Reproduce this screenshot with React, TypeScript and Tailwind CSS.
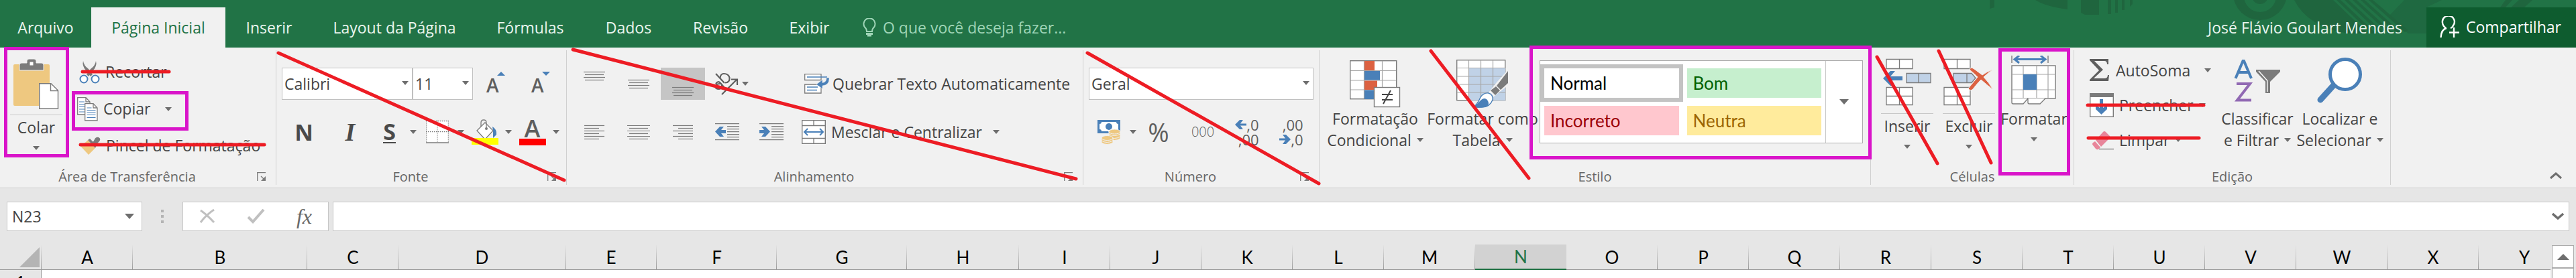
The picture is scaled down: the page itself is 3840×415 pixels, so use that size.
import type { ReactNode } from "react";

const GRAY = "#7b7b7b";
const BLUE = "#4a80b8";
const RED = "#ed1c24";
const MAGENTA = "#d914c9";

function Arrow() {
  return (
    <svg width="10" height="6" viewBox="0 0 10 6" className="shrink-0">
      <path d="M0 0H10L5 6Z" fill="#6e6e6e" />
    </svg>
  );
}

function Launcher() {
  return (
    <svg width="14" height="14" viewBox="0 0 14 14" className="shrink-0">
      <path d="M.7 13V.7H13" fill="none" stroke={GRAY} strokeWidth="1.3" />
      <path d="M6 6l4 4" stroke={GRAY} strokeWidth="1.3" />
      <path d="M13 6v7H6Z" fill={GRAY} />
    </svg>
  );
}

function Group({ label, className, launcher, children }: { label: string; className: string; launcher?: boolean; children: ReactNode }) {
  return (
    <section aria-label={label} className={`flex shrink-0 flex-col ${className}`}>
      <div className="flex flex-1">
        <div className="flex min-w-0 flex-1 flex-col">
          <div className="h-[178px]">{children}</div>
          <div className="flex h-[30px] items-center">
            <div className="flex-1 text-center text-[20px] leading-[30px] text-[#666]">{label}</div>
            {launcher && (
              <button aria-label={`Opções de ${label}`} className="flex w-8 justify-start pl-1">
                <Launcher />
              </button>
            )}
          </div>
        </div>
        <div className="my-1 w-px bg-[#d0d0d0]" />
      </div>
    </section>
  );
}

function Big({ icon, lines, className, rule, arrowBelow }: { icon: ReactNode; lines: string[]; className: string; rule?: boolean; arrowBelow?: boolean }) {
  return (
    <button className={`flex shrink-0 flex-col items-center whitespace-nowrap pt-3 leading-8 ${className}`}>
      {icon}
      {rule && <span className="mt-2 mb-[2px] h-px w-full bg-[#c8c8c8]" />}
      {lines.map((t, i) => (
        <span key={t} className="flex items-center gap-2">
          {t}
          {!arrowBelow && i === lines.length - 1 && <Arrow />}
        </span>
      ))}
      {arrowBelow && (
        <span className="mt-3">
          <Arrow />
        </span>
      )}
    </button>
  );
}

function Tool({ label, children, className = "w-[66px]" }: { label: string; children: ReactNode; className?: string }) {
  return (
    <button aria-label={label} className={`flex h-12 shrink-0 items-center justify-center ${className}`}>
      {children}
    </button>
  );
}

function SplitTool({ label, children }: { label: string; children: ReactNode }) {
  return (
    <button aria-label={label} className="flex h-12 w-[71px] shrink-0 items-center">
      <span className="flex flex-1 justify-center">{children}</span>
      <Arrow />
    </button>
  );
}

function Combo({ label, value, className }: { label: string; value: string; className: string }) {
  return (
    <div className={`relative shrink-0 ${className}`}>
      <select aria-label={label} defaultValue={value} className="h-12 w-full appearance-none border border-[#c0c0c0] bg-white pl-[3px] leading-8 text-[#444]">
        <option>{value}</option>
      </select>
      <span className="pointer-events-none absolute top-5 right-[6px]">
        <Arrow />
      </span>
    </div>
  );
}

type LineRow = [number, number, number];

function Lines({ rows, shift = 0 }: { rows: LineRow[]; shift?: number }) {
  return (
    <svg width="36" height="48" viewBox="0 0 36 48">
      {rows.map(([y, a, b]) => (
        <path key={y} d={`M${a} ${y + shift + 0.5}H${b}`} stroke={GRAY} strokeWidth="1.2" />
      ))}
    </svg>
  );
}

const verticalRows: LineRow[] = [[6, 2, 34], [10, 4, 32], [14, 2, 34], [18, 4, 32]];
const leftRows: LineRow[] = [[14, 3, 33], [18, 3, 25], [22, 3, 33], [26, 3, 25], [30, 3, 33], [34, 3, 25]];
const centerRows: LineRow[] = [[14, 1, 35], [18, 4, 32], [22, 1, 35], [26, 4, 32], [30, 1, 35], [34, 4, 32]];
const rightRows: LineRow[] = [[14, 3, 33], [18, 11, 33], [22, 3, 33], [26, 11, 33], [30, 3, 33], [34, 11, 33]];

function PasteIcon() {
  return (
    <svg width="68" height="80" viewBox="0 0 68 80" className="shrink-0">
      <rect x="0" y="13" width="54" height="62" rx="2" fill="#eec880" />
      <path d="M9 22V14q0-3 3-3h8V8q0-3 3-3h8q3 0 3 3v3h8q3 0 3 3v8Z" fill={GRAY} stroke="#f1f1f1" strokeWidth="1" />
      <rect x="24.500" y="9.500" width="5" height="5" fill="#fff" />
      <path d="M38.700 41.700H56L66.500 52V79.300H38.700Z" fill="#fff" stroke={GRAY} strokeWidth="1.400" />
      <path d="M55.500 42v10.500H66" fill="none" stroke={GRAY} strokeWidth="1.400" />
    </svg>
  );
}

function CutIcon() {
  return (
    <svg width="31" height="34" viewBox="0 0 31 34">
      <path d="M6 0Q7 7 14 12L20 20l-3 3-7-9Q4 7 6 0Z" fill={GRAY} />
      <path d="M25 0Q24 7 17 12L11 20l3 3 7-9Q27 7 25 0Z" fill={GRAY} />
      <circle cx="7" cy="27" r="5.500" fill="#fff" stroke={BLUE} strokeWidth="2" />
      <circle cx="24" cy="27" r="5.500" fill="#fff" stroke={BLUE} strokeWidth="2" />
    </svg>
  );
}

function CopyIcon() {
  return (
    <svg width="31" height="36" viewBox="0 0 31 36">
      <path d="M.7.7H13L19 7V26H.7Z" fill="#fff" stroke={GRAY} strokeWidth="1.300" />
      <path d="M13 .7V7h6" fill="none" stroke={GRAY} strokeWidth="1.300" />
      <path d="M3 7h8M3 11h14M3 14h14M3 18h14M3 22h14" fill="none" stroke={BLUE} strokeWidth="1.200" />
      <path d="M11.700 9.700H24L30 16V35H11.700Z" fill="#fff" stroke={GRAY} strokeWidth="1.300" />
      <path d="M24 9.700V16h6" fill="none" stroke={GRAY} strokeWidth="1.300" />
      <path d="M14.500 16h7M14.500 19.500h13M14.500 23h13M14.500 26.500h13M14.500 30.500h13" stroke={BLUE} strokeWidth="1.200" />
    </svg>
  );
}

function BrushIcon() {
  return (
    <svg width="33" height="28" viewBox="0 0 33 28">
      <path d="M1 12Q9 11 14 5L25 17L15 27Z" fill="#eec880" />
      <path d="M14 5l3-2 10 10-2 4Z" fill={GRAY} />
      <path d="M20 9Q23 7 24 4Q26 0 30 1Q34 3 31 7L25 13Z" fill={GRAY} />
    </svg>
  );
}

function FontSizeIcon({ up }: { up?: boolean }) {
  return (
    <span className="relative flex h-12 w-7 items-end pb-1">
      <span className="text-[28px] leading-9 font-semibold text-[#5e5e5e]">A</span>
      <svg width="12" height="6" viewBox="0 0 12 6" className="absolute top-[6px] right-0">
        <path d={up ? "M0 6H12L6 0Z" : "M0 0H12L6 6Z"} fill={BLUE} />
      </svg>
    </span>
  );
}

function BordersIcon() {
  return (
    <svg width="34" height="34" viewBox="0 0 34 34">
      <rect x="1" y="1" width="32" height="32" fill="#fff" />
      <path d="M.7 0V33M17 0V33M33.300 0V33M0 .7H34M0 16.700H34" stroke={GRAY} strokeWidth="1.200" strokeDasharray="1.500 1.500" />
      <path d="M0 33H34" stroke={GRAY} strokeWidth="1.500" />
    </svg>
  );
}

function FillIcon() {
  return (
    <svg width="40" height="40" viewBox="0 0 40 40">
      <path d="M8 18L20 6L32 18L20 31Z" fill="#fff" stroke={GRAY} strokeWidth="1.300" />
      <path d="M14 12V6q0-4 4-4t4 4v8" fill="none" stroke={GRAY} strokeWidth="1.300" />
      <circle cx="22" cy="15" r="2" fill={GRAY} />
      <path d="M31 12Q38 16 37 24L32 29V18Z" fill={BLUE} />
      <path d="M0 29H40V39H0Z" fill="#ff0" />
    </svg>
  );
}

function OrientationIcon() {
  return (
    <svg width="38" height="36" viewBox="0 0 38 36">
      <g fill="none" stroke="#5e5e5e" strokeWidth="2.200">
        <path d="M3 3L16 17" />
        <path d="M9.500 9.500Q10 3 15 3Q22 3 23.500 9Q24 16 17 16.500" />
        <path d="M3 18Q6 13 10 17L16 24M12 19Q13 25 8 26Q2 26 2 21Q4 18 10 18" />
        <path d="M12 34L34 12M26 11.500H35V20" />
      </g>
    </svg>
  );
}

function WrapIcon() {
  return (
    <svg width="38" height="30" viewBox="0 0 38 30">
      <path d="M.7.7H25V9.500H.7ZM.7 16H25V29H.7Z" fill="#fff" stroke={GRAY} strokeWidth="1.300" />
      <path d="M4 5H34M4 20H20M4 24.500H19" stroke={BLUE} strokeWidth="1.300" />
      <path d="M37 6V8Q37 17 27 18v4.500L18 16l9-7v4.500Q33 13 33 6Z" fill={BLUE} stroke="#f1f1f1" strokeWidth=".5" />
    </svg>
  );
}

function MergeIcon() {
  return (
    <svg width="36" height="36" viewBox="0 0 36 36">
      <rect x=".7" y=".7" width="34.600" height="34.600" fill="#fff" stroke={GRAY} strokeWidth="1.400" />
      <path d="M1 8.500H35M1 27.500H35M18 1V8.500M18 27.500V35" stroke={GRAY} strokeWidth="1.300" />
      <path d="M4 18H32M9 13L4 18l5 5M27 13l5 5-5 5" fill="none" stroke={BLUE} strokeWidth="2" />
    </svg>
  );
}

function IndentIcon({ right }: { right?: boolean }) {
  return (
    <svg width="36" height="26" viewBox="0 0 36 26">
      <path d="M0 .7H36M18 4.700H36M18 8.700H36M18 12.700H36M18 16.700H36M18 20.700H36M0 24.700H36" stroke={GRAY} strokeWidth="1.200" />
      <path d={right ? "M0 10H7L3 5H9L16 12.500L9 20H3L7 15H0Z" : "M16 10H9L13 5H7L0 12.500L7 20H13L9 15H16Z"} fill={BLUE} />
    </svg>
  );
}

function MoneyIcon() {
  return (
    <svg width="35" height="38" viewBox="0 0 35 38">
      <rect x="0" y="1" width="34" height="20" fill={BLUE} />
      <path d="M6 4H28Q28 7 31 7V15Q28 15 28 18H6Q6 15 3 15V7Q6 7 6 4Z" fill="#fff" />
      <circle cx="17" cy="11" r="5" fill={BLUE} />
      <g fill="#eec880" stroke="#f1f1f1" strokeWidth="1">
        <path d="M17 18v11q8 5 17 0V18Z" />
        <path d="M17 22q8 5 17 0M17 26q8 5 17 0" fill="none" />
        <ellipse cx="25.500" cy="18.500" rx="8.500" ry="3.500" />
        <path d="M6 28v7q8 5 17 0V28Z" />
        <path d="M6 32q8 5 17 0" fill="none" />
        <ellipse cx="14.500" cy="28" rx="8.500" ry="3.500" />
      </g>
    </svg>
  );
}

function SmallArrow({ right }: { right?: boolean }) {
  return (
    <svg width="17" height="14" viewBox="0 0 17 14">
      <path d={right ? "M0 5.500H9L5 0H10L17 7L10 14H5L9 8.500H0Z" : "M17 5.500H8L12 0H7L0 7L7 14H12L8 8.500H17Z"} fill={BLUE} />
    </svg>
  );
}

function CondIcon() {
  return (
    <svg width="76" height="78" viewBox="0 0 76 78" className="shrink-0">
      <rect x=".7" y="7.700" width="69" height="57" fill="#fff" stroke={GRAY} strokeWidth="1.400" />
      <path d="M1 22.500H69M1 37H69M1 51H69M21.500 8V64M48.500 8V64" stroke="#a6a6a6" strokeWidth="1.200" />
      <path d="M22 8H37V22H22ZM22 37.500H41V51H22Z" fill="#dc6141" />
      <path d="M22 23H45V36.500H22ZM22 51.500H37V65H22Z" fill={BLUE} />
      <rect x="36.500" y="47.500" width="38" height="29" fill="#fff" stroke={GRAY} strokeWidth="1.400" />
      <path d="M48 58H64M48 66H64M61 52L50 72" stroke="#444" strokeWidth="2" />
    </svg>
  );
}

function TableIcon() {
  return (
    <svg width="78" height="78" viewBox="0 0 78 78" className="shrink-0">
      <rect x=".7" y="6.700" width="72" height="60" fill="#fff" stroke={GRAY} strokeWidth="1.400" />
      <rect x="19" y="19" width="54" height="48" fill="#c0d2e7" />
      <path d="M1 18.500H73M1 31H73M1 43H73M1 55H73M18.500 7V67M36.500 7V67M54.500 7V67" stroke="#a6a6a6" strokeWidth="1.200" />
      <path d="M78 20V44L66 53L50 66L44 60L60 40Z" fill="#f1f1f1" />
      <path d="M77 23V41L66 51L60 45ZM59 46L65 52L58 59L51 52Z" fill={GRAY} />
      <path d="M26 77Q33 70 36 62Q41 55 48 56Q55 58 54 66Q50 77 38 77Z" fill="#fff" stroke={BLUE} strokeWidth="1.400" />
      <path d="M26 77Q33 70 37 66Q42 62 46 66Q50 72 46 76Q36 79 26 77Z" fill={BLUE} />
    </svg>
  );
}

function InsertIcon() {
  return (
    <svg width="74" height="78" viewBox="0 0 74 78" className="shrink-0">
      <g fill="#fff" stroke={GRAY} strokeWidth="1.300">
        <path d="M6 5.500H45V19.500H6ZM25.500 5.500V19.500M6 47.500H45V73.500H6ZM25.500 47.500V73.500M6 60.500H45" />
        <path d="M36 26.500H72V40.500H36ZM54 26.500V40.500" fill="#c0d2e7" />
      </g>
      <path d="M1 34L12 23H19L12 31H30V37H12L19 45H12Z" fill={BLUE} />
    </svg>
  );
}

function DeleteIcon() {
  return (
    <svg width="76" height="78" viewBox="0 0 76 78" className="shrink-0">
      <g fill="#fff" stroke={GRAY} strokeWidth="1.300">
        <path d="M1 5.500H40V19.500H1ZM20.500 5.500V19.500M1 47.500H40V73.500H1ZM20.500 47.500V73.500M1 60.500H40" />
        <path d="M15 26.500H42L48 33.500L42 40.500H15ZM35 26.500V40.500" fill="#c0d2e7" />
      </g>
      <path d="M39 21Q40 16 46 20L58 29Q66 23 74 21Q66 26 60 32Q68 40 74 51Q64 43 56 36Q50 42 44 50Q40 54 37 49L51 32Q46 27 39 21Z" fill="#dc6141" stroke="#f1f1f1" strokeWidth="1" />
    </svg>
  );
}

function FormatIcon() {
  return (
    <svg width="68" height="78" viewBox="0 0 68 78" className="shrink-0">
      <path d="M1 0V11M55 0V11" stroke={GRAY} strokeWidth="1.400" />
      <path d="M6 5.500H50" stroke={BLUE} strokeWidth="3" />
      <path d="M12 0L5 5.500L12 11M44 0L51 5.500L44 11" fill="none" stroke={BLUE} strokeWidth="3" />
      <rect x="1" y="15" width="65" height="49" fill="#fff" stroke={GRAY} strokeWidth="1.400" />
      <path d="M18 15V64M38 15V64M55 15V64M1 28H66M1 51H66" stroke="#a6a6a6" strokeWidth="1.200" />
      <rect x="18" y="28" width="20" height="23" fill={BLUE} />
      <path d="M1 64V70Q1 72 3 72H18L25 64M25 64V70Q25 72 27 72H43L51 64" fill="#fff" stroke={GRAY} strokeWidth="1.300" />
    </svg>
  );
}

function SigmaIcon() {
  return (
    <svg width="30" height="34" viewBox="0 0 30 34">
      <path d="M0 0H28V8H26Q26 3 22 3H7L20 16L6 29H22Q27 29 27 24H29L28 33H0V31L14 17L0 2Z" fill="#5e5e5e" />
    </svg>
  );
}

function FillDownIcon() {
  return (
    <svg width="36" height="36" viewBox="0 0 36 36">
      <rect x=".7" y=".7" width="34.600" height="34.600" fill="#fff" stroke={GRAY} strokeWidth="1.400" />
      <path d="M0 0H36V6H0Z" fill={GRAY} />
      <path d="M15 9H20V22L26 17V24L17.500 32L9 24V17L15 22Z" fill={BLUE} />
    </svg>
  );
}

function EraserIcon() {
  return (
    <svg width="36" height="30" viewBox="0 0 36 30">
      <path d="M9 15L20 3Q22 1 24 3L30 9Q31 11 29 13L17 25ZM8 17L16 26L13 29Q11 30 9 28L5 23Q3 21 5 19Z" fill="#e8859a" />
      <path d="M14 28.500H36" stroke={GRAY} strokeWidth="1.300" />
    </svg>
  );
}

function SortIcon() {
  return (
    <svg width="70" height="78" viewBox="0 0 70 78" className="shrink-0">
      <path d="M2.500 34L13.500 8H15L26 34M6.500 25H22" fill="none" stroke={BLUE} strokeWidth="4" />
      <path d="M4 42H24L5 66.500H26" fill="none" stroke="#9169b3" strokeWidth="4" />
      <path d="M33 21H69V24L54 39V56H47V39L33 24Z" fill={GRAY} />
      <path d="M37 23L50 37.500V54" fill="none" stroke="#fff" strokeWidth="1.300" />
    </svg>
  );
}

function FindIcon() {
  return (
    <svg width="68" height="78" viewBox="0 0 68 78" className="shrink-0">
      <path d="M5 66L24 45" stroke={BLUE} strokeWidth="9" strokeLinecap="round" />
      <circle cx="42" cy="28" r="22.500" fill="#fff" stroke={BLUE} strokeWidth="5" />
    </svg>
  );
}

function Row({ icon, text, arrow, className, gap = "gap-2" }: { icon: ReactNode; text: string; arrow?: string; className: string; gap?: string }) {
  return (
    <button className={`flex items-center whitespace-nowrap ${gap} ${className}`}>
      {icon}
      <span>{text}</span>
      {arrow && (
        <span className={arrow}>
          <Arrow />
        </span>
      )}
    </button>
  );
}

const TABS = [
  { name: "Arquivo", width: "w-[136px]" },
  { name: "Página Inicial", width: "w-[200px]", active: true },
  { name: "Inserir", width: "w-[130px]" },
  { name: "Layout da Página", width: "w-[244px]" },
  { name: "Fórmulas", width: "w-[161px]" },
  { name: "Dados", width: "w-[132px]" },
  { name: "Revisão", width: "w-[142px]" },
  { name: "Exibir", width: "w-[123px]" },
];

function TitlePattern() {
  return (
    <svg width="880" height="71" viewBox="2960 0 880 71" className="absolute top-0 right-0">
      <g fill="#1f653e">
        <path d="M2966 0H2973V11L2966 13ZM3034 0H3082V14Q3050 10 3034 0ZM3102 0H3129V22H3108L3102 19Z" />
        <path d="M3142 0H3147V21H3142ZM3153 0H3157V19H3153ZM3163 0H3167V15H3163ZM3175 0H3179V6L3175 10Z" />
        <circle cx="3369" cy="-10" r="40" />
        <path d="M3420 0H3478L3530 50H3500Q3440 40 3420 0ZM3483 0H3489L3542 50H3535ZM3495 0H3501L3555 50H3548ZM3507 0H3513L3568 50H3561ZM3519 0H3525L3581 50H3574ZM3531 0H3537L3590 45L3585 48Z" />
        <path d="M3584 0L3560 25L3590 50H3617V11L3640 0Z" opacity=".7" />
        <path d="M3735 0H3745L3735 11H3727ZM3755 0H3775L3763 11H3743Z" />
      </g>
      <circle cx="3369" cy="-6" r="24" fill="#217346" />
      <circle cx="3369" cy="-6" r="12" fill="#1f653e" />
    </svg>
  );
}

function TitleBar() {
  return (
    <header className="relative flex h-[71px] items-end overflow-hidden bg-[#217346] text-[#e9f5ee]">
      <TitlePattern />
      <nav className="flex h-[60px]">
        {TABS.map((t) => (
          <button key={t.name} className={`${t.width} shrink-0 whitespace-nowrap ${t.active ? "bg-[#f1f1f1] text-[#217346]" : ""}`}>
            {t.name}
          </button>
        ))}
      </nav>
      <div className="ml-[18px] flex h-[60px] items-center gap-[10px] text-[#9fd5b7]">
        <svg width="20" height="28" viewBox="0 0 20 28">
          <path d="M6 20Q6 16 3 13.500A8.500 8.500 0 1 1 17 13.500Q14 16 14 20Z" fill="none" stroke="#9fd5b7" strokeWidth="2" />
          <path d="M5 22H15V25H13V27.500H7V25H5Z" fill="#9fd5b7" />
        </svg>
        <input aria-label="Pesquisar comandos" placeholder="O que você deseja fazer..." className="h-10 w-[320px] bg-transparent outline-none placeholder:text-[#9fd5b7]" />
      </div>
      <div className="relative ml-auto flex h-[60px] items-center">
        <button className="mr-9 h-full whitespace-nowrap">José Flávio Goulart Mendes</button>
        <button className="mb-px flex h-full w-[223px] items-center gap-[10px] bg-[#0e5c2f] pl-5 text-white">
          <svg width="29" height="33" viewBox="0 0 29 33" fill="none" stroke="#fff" strokeWidth="2.400">
            <path d="M9 18Q4 14 4 10A9 9 0 1 1 20 14Q19 17 16 18M10 18Q2 20 1.500 32" />
            <path d="M21 17V32M14 24.500H29" />
          </svg>
          Compartilhar
        </button>
      </div>
    </header>
  );
}

const STYLES = [
  { name: "Normal", cls: "bg-white text-black outline-6 outline-[#c3c3c3]" },
  { name: "Bom", cls: "bg-[#c6efce] text-[#006100]" },
  { name: "Incorreto", cls: "bg-[#ffc7ce] text-[#9c0006]" },
  { name: "Neutra", cls: "bg-[#ffeb9c] text-[#9c6500]" },
];

const STRIKES = [
  "M123 36H252", "M120 145H394", "M415 8L841 198", "M854 3L1604 196", "M1621 8L1966 203",
  "M2133 5L2279 195", "M2798 14L2888 173", "M2890 5L2968 172", "M3112 86H3285", "M3113 135H3278",
];

function Annotations() {
  return (
    <svg width="3300" height="209" viewBox="0 0 3300 209" className="pointer-events-none absolute top-0 left-0 overflow-visible" fill="none" strokeWidth="5">
      <g stroke={RED} strokeLinecap="round">
        {STRIKES.map((d) => (
          <path key={d} d={d} />
        ))}
      </g>
      <g stroke={MAGENTA}>
        <rect x="8.500" y="1.500" width="92" height="160" />
        <rect x="109.500" y="67.500" width="169" height="54" />
        <rect x="2282.500" y="-.5" width="505" height="165" />
        <rect x="2981.500" y="3.500" width="102" height="185" />
      </g>
    </svg>
  );
}

function Ribbon() {
  return (
    <div className="relative flex h-[210px] border-b border-[#cfcfcf] bg-[#f1f1f1]">
      <Group label="Área de Transferência" className="w-[412px]" launcher>
        <div className="flex">
          <Big icon={<PasteIcon />} lines={["Colar"]} className="ml-[15px] w-[78px]" rule arrowBelow />
          <div className="ml-[22px] pt-[9px]">
            <Row className="h-[55px] pl-[3px]" icon={<CutIcon />} text="Recortar" />
            <Row className="h-[55px]" icon={<CopyIcon />} text="Copiar" arrow="ml-[14px]" />
            <Row className="h-[55px] pl-[2px]" icon={<BrushIcon />} text="Pincel de Formatação" />
          </div>
        </div>
      </Group>

      <Group label="Fonte" className="w-[433px]" launcher>
        <div className="flex flex-col gap-6 pt-[30px] pl-2">
          <div className="flex">
            <Combo label="Fonte" value="Calibri" className="w-[195px]" />
            <Combo label="Tamanho da fonte" value="11" className="w-[90px]" />
            <Tool label="Aumentar tamanho" className="w-[68px]"><FontSizeIcon up /></Tool>
            <Tool label="Diminuir tamanho" className="w-[66px]"><FontSizeIcon /></Tool>
          </div>
          <div className="flex text-[#4a4a4a]">
            <Tool label="Negrito"><b className="text-[34px]">N</b></Tool>
            <Tool label="Itálico" className="w-[64px] pl-2">
              <i className="font-['Liberation_Serif'] text-[38px] font-bold">I</i>
            </Tool>
            <SplitTool label="Sublinhado">
              <b className="border-b-2 border-[#4a4a4a] text-[34px] leading-8">S</b>
            </SplitTool>
            <SplitTool label="Bordas"><BordersIcon /></SplitTool>
            <SplitTool label="Cor de preenchimento"><FillIcon /></SplitTool>
            <SplitTool label="Cor da fonte">
              <span className="flex h-10 w-10 items-center justify-center border-b-10 border-[#f00] text-[36px] leading-8 font-semibold text-[#5e5e5e]">A</span>
            </SplitTool>
          </div>
        </div>
      </Group>

      <Group label="Alinhamento" className="w-[770px]" launcher>
        <div className="flex flex-col gap-6 pt-[30px] pl-2">
          <div className="flex">
            <Tool label="Alinhar acima"><Lines rows={verticalRows} /></Tool>
            <Tool label="Alinhar no meio"><Lines rows={verticalRows} shift={12} /></Tool>
            <Tool label="Alinhar abaixo" className="w-[66px] bg-[#c5c5c5]"><Lines rows={verticalRows} shift={23} /></Tool>
            <Tool label="Orientação" className="w-[66px] gap-1 pl-3"><OrientationIcon /><Arrow /></Tool>
            <Row className="ml-[82px]" gap="gap-1" icon={<WrapIcon />} text="Quebrar Texto Automaticamente" />
          </div>
          <div className="flex">
            <Tool label="Alinhar à esquerda"><Lines rows={leftRows} /></Tool>
            <Tool label="Centralizar"><Lines rows={centerRows} /></Tool>
            <Tool label="Alinhar à direita"><Lines rows={rightRows} /></Tool>
            <Tool label="Diminuir recuo"><IndentIcon /></Tool>
            <Tool label="Aumentar recuo"><IndentIcon right /></Tool>
            <Row className="ml-3" icon={<MergeIcon />} text="Mesclar e Centralizar" arrow="ml-2" />
          </div>
        </div>
      </Group>

      <Group label="Número" className="w-[352px]" launcher>
        <div className="flex flex-col gap-6 pt-[30px] pl-2">
          <Combo label="Formato de número" value="Geral" className="w-[335px]" />
          <div className="flex text-[#5e5e5e]">
            <SplitTool label="Formato contábil"><MoneyIcon /></SplitTool>
            <Tool label="Porcentagem"><span className="text-[38px]">%</span></Tool>
            <Tool label="Separador de milhares"><span className="text-[20px] font-light">000</span></Tool>
            <Tool label="Aumentar casas decimais">
              <span className="flex flex-col items-end text-[22px] leading-[22px]"><span className="flex items-center"><SmallArrow />,0</span><span>,00</span></span>
            </Tool>
            <Tool label="Diminuir casas decimais">
              <span className="flex flex-col items-end text-[22px] leading-[22px]"><span>,00</span><span className="flex items-center"><SmallArrow right />,0</span></span>
            </Tool>
          </div>
        </div>
      </Group>

      <Group label="Estilo" className="w-[822px]">
        <div className="flex">
          <Big icon={<CondIcon />} lines={["Formatação", "Condicional"]} className="ml-2 w-[150px]" />
          <Big icon={<TableIcon />} lines={["Formatar como", "Tabela"]} className="w-[170px]" />
          <div className="mt-[19px] flex h-[124px] w-[482px] border border-[#ababab] bg-white">
            <div className="grid w-[425px] grid-cols-2 content-start gap-3 px-[6px] pt-[11px] font-['Lato']">
              {STYLES.map((s) => (
                <button key={s.name} className={`h-11 pl-[9px] text-left text-[26px] ${s.cls}`}>{s.name}</button>
              ))}
            </div>
            <button aria-label="Mais estilos" className="flex flex-1 items-center justify-center border-l border-[#c6c6c6]">
              <svg width="14" height="8" viewBox="0 0 14 8"><path d="M0 0H14L7 8Z" fill="#6e6e6e" /></svg>
            </button>
          </div>
        </div>
      </Group>

      <Group label="Células" className="w-[303px]">
        <div className="flex">
          <Big icon={<InsertIcon />} lines={["Inserir"]} className="ml-[15px] w-[78px]" rule arrowBelow />
          <Big icon={<DeleteIcon />} lines={["Excluir"]} className="ml-[14px] w-[78px]" rule arrowBelow />
          <Big icon={<FormatIcon />} lines={["Formatar"]} className="ml-1 w-[108px]" arrowBelow />
        </div>
      </Group>

      <Group label="Edição" className="w-[472px]">
        <div className="flex">
          <div className="w-[210px] shrink-0 pt-2 pl-[23px]">
            <Row className="h-[52px]" gap="gap-[9px]" icon={<SigmaIcon />} text="AutoSoma" arrow="ml-3" />
            <Row className="h-[52px]" icon={<FillDownIcon />} text="Preencher" arrow="ml-0" />
            <Row className="h-[52px]" icon={<EraserIcon />} text="Limpar" arrow="ml-0" />
          </div>
          <Big icon={<SortIcon />} lines={["Classificar", "e Filtrar"]} className="ml-2 w-[110px]" />
          <Big icon={<FindIcon />} lines={["Localizar e", "Selecionar"]} className="w-[136px]" />
        </div>
      </Group>

      <button aria-label="Recolher a faixa de opções" className="mt-auto ml-auto pr-5 pb-3">
        <svg width="20" height="12" viewBox="0 0 20 12"><path d="M2 10L10 3L18 10" fill="none" stroke="#6e6e6e" strokeWidth="3" /></svg>
      </button>
      <Annotations />
    </div>
  );
}

function FormulaBar() {
  return (
    <div className="flex h-[84px] shrink-0 items-center px-[10px]">
      <div className="flex h-11 w-[202px] items-center border border-[#c6c6c6] bg-white pr-[11px]">
        <input aria-label="Caixa de nome" defaultValue="N23" className="h-full min-w-0 flex-1 pl-[7px] outline-none" />
        <button aria-label="Nomes definidos">
          <svg width="14" height="8" viewBox="0 0 14 8"><path d="M0 0H14L7 8Z" fill="#6e6e6e" /></svg>
        </button>
      </div>
      <svg width="4" height="20" viewBox="0 0 4 20" className="mx-7"><path d="M0 0H4V4H0ZM0 8H4V12H0ZM0 16H4V20H0Z" fill="#b4b4b4" /></svg>
      <div className="flex h-11 w-[218px] items-center justify-between border border-[#c6c6c6] bg-white px-6">
        <button aria-label="Cancelar">
          <svg width="24" height="22" viewBox="0 0 24 22"><path d="M2 2Q12 9 22 20M22 1Q10 9 2 20" fill="none" stroke="#c0c0c0" strokeWidth="3" /></svg>
        </button>
        <button aria-label="Inserir">
          <svg width="27" height="22" viewBox="0 0 27 22"><path d="M2 12L9 19L25 1" fill="none" stroke="#c0c0c0" strokeWidth="4" /></svg>
        </button>
        <button aria-label="Inserir função" className="font-['Liberation_Serif'] text-[32px] leading-10 text-[#6a6a6a] italic">fx</button>
      </div>
      <div className="ml-[6px] flex h-11 flex-1 items-center border border-[#c6c6c6] bg-white pr-[7px]">
        <input aria-label="Barra de fórmulas" className="h-full min-w-0 flex-1 px-2 outline-none" />
        <button aria-label="Expandir barra de fórmulas">
          <svg width="18" height="12" viewBox="0 0 18 12"><path d="M1 2L9 9L17 2" fill="none" stroke="#6e6e6e" strokeWidth="3.500" /></svg>
        </button>
      </div>
    </div>
  );
}

const COLUMNS: [string, string][] = [
  ["A", "w-[136px]"], ["B", "w-[260px]"], ["C", "w-[136px]"], ["D", "w-[249px]"], ["E", "w-[136px]"], ["F", "w-[179px]"],
  ["G", "w-[194px]"], ["H", "w-[167px]"], ["I", "w-[136px]"], ["J", "w-[136px]"], ["K", "w-[136px]"], ["L", "w-[136px]"],
  ["M", "w-[136px]"], ["N", "w-[136px]"], ["O", "w-[136px]"], ["P", "w-[136px]"], ["Q", "w-[136px]"], ["R", "w-[136px]"],
  ["S", "w-[136px]"], ["T", "w-[136px]"], ["U", "w-[136px]"], ["V", "w-[136px]"], ["W", "w-[136px]"], ["X", "w-[136px]"], ["Y", ""],
];

function Sheet() {
  return (
    <div className="flex min-h-0 flex-1 overflow-hidden">
      <div className="flex-1 overflow-hidden">
        <table className="w-[calc(100%+29px)] table-fixed border-separate border-spacing-0 font-['Lato'] text-[26px] text-black">
          <thead>
            <tr className="h-[38px]">
              <th className="w-[62px] border-b border-[#9b9b9b] bg-[linear-gradient(to_bottom,#e6e6e6,#9b9b9b)] bg-[length:1px_100%] bg-right bg-no-repeat p-0">
                <svg width="30" height="30" viewBox="0 0 30 30" className="ml-[29px]"><path d="M30 0V30H0Z" fill="#b4b4b4" /></svg>
              </th>
              {COLUMNS.map(([c, w]) => (
                <th
                  key={c}
                  className={`${w} p-0 leading-[34px] font-normal ${
                    c === "N"
                      ? "border-b-2 border-[#217346] bg-[#d2d2d2] text-[#217346]"
                      : "border-b border-[#9b9b9b] bg-[linear-gradient(to_bottom,#e6e6e6,#9b9b9b)] bg-[length:1px_100%] bg-right bg-no-repeat"
                  }`}
                >
                  {c}
                </th>
              ))}
            </tr>
          </thead>
          <tbody>
            <tr className="h-10">
              <th className="border-r border-b border-[#9b9b9b] p-0 font-normal">1</th>
              {COLUMNS.map(([c]) => (
                <td key={c} className="border-b border-[#d4d4d4] bg-white" />
              ))}
            </tr>
          </tbody>
        </table>
      </div>
      <div className="flex w-[38px] flex-col items-start pt-px pl-[2px]">
        <button aria-label="Rolar para cima" className="flex h-[34px] w-[33px] shrink-0 items-center justify-center border border-[#ababab] bg-white">
          <svg width="18" height="9" viewBox="0 0 18 9"><path d="M0 9H18L9 0Z" fill="#6e6e6e" /></svg>
        </button>
        <div className="w-[33px] flex-1 border border-b-0 border-[#ababab] bg-white" />
      </div>
    </div>
  );
}

export default function App() {
  return (
    <div className="flex h-screen flex-col overflow-hidden bg-[#e6e6e6] font-['Open_Sans','Noto_Sans',sans-serif] text-[23px] text-[#444]">
      <TitleBar />
      <Ribbon />
      <FormulaBar />
      <Sheet />
    </div>
  );
}
